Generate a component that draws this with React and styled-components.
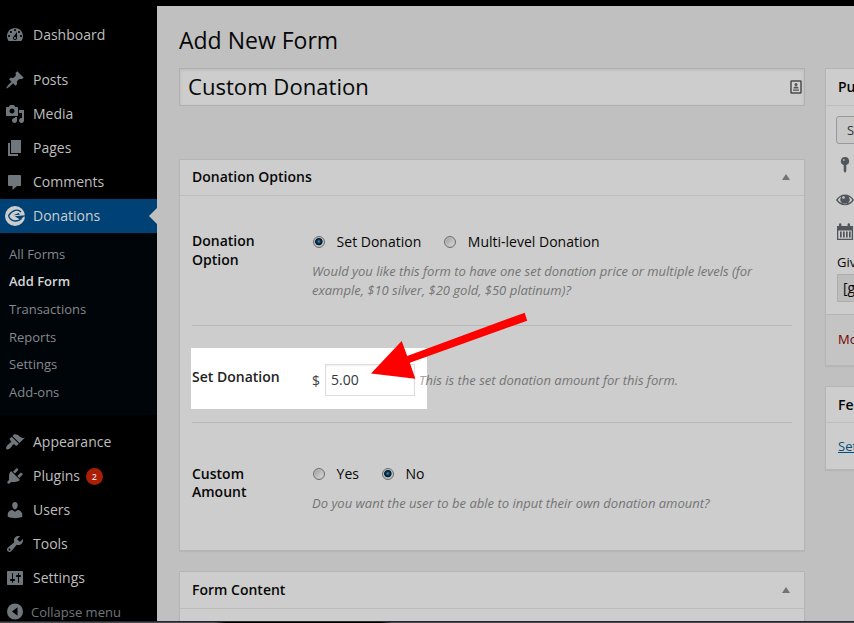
import React from "react";
import styled, { createGlobalStyle, css } from "styled-components";

const GlobalStyle = createGlobalStyle`
  * { box-sizing: border-box; }
  html, body { margin: 0; padding: 0; height: 100%; overflow: hidden; background: #000; }
  body { font-family: "Open Sans", sans-serif; font-size: 14px; color: #070707; }
`;

const Page = styled.div`
  width: 854px;
  height: 623px;
  display: flex;
  flex-direction: column;
  overflow: hidden;
  background: #000;
`;
const Columns = styled.div`
  display: flex;
  height: 615px;
  margin-top: 6px;
`;
const Taskbar = styled.div`
  height: 2px;
  border-top: 1px solid #26282b;
  background: linear-gradient(90deg, #4a4b4e 0 214px, #000 226px 380px, #4a4b4e 392px);
`;

const Sidebar = styled.nav`
  width: 157px;
  flex: none;
  padding-top: 12px;
  background: #000;
  overflow: hidden;
`;
const MenuItem = styled.a`
  display: flex;
  align-items: center;
  height: 34px;
  padding-left: 5px;
  margin-top: ${(p) => p.$gap || 0}px;
  color: #bebebe;
  line-height: 18px;
  position: relative;
  ${(p) => p.$active && css`
    background: #004276;
    color: #cdcdcd;
    &::after {
      content: "";
      position: absolute;
      right: 0;
      top: 9px;
      border: 8px solid transparent;
      border-left-width: 0;
      border-right-color: #c1c1c1;
    }
  `}
`;
const MenuIcon = styled.svg`
  width: 20px;
  height: 20px;
  flex: none;
  margin-right: 8px;
  margin-top: -1px;
  fill: #70777c;
`;
const CollapseItem = styled(MenuItem)`
  font-size: 13px;
  color: #70777c;
  ${MenuIcon} { margin-right: 6px; }
`;
const Count = styled.span`
  width: 17px;
  height: 17px;
  margin-left: 6px;
  border-radius: 50%;
  background: #aa1e04;
  color: #dcdcdc;
  font-size: 9px;
  font-weight: 600;
  line-height: 17px;
  text-align: center;
`;
const Submenu = styled.div`
  height: 182px;
  padding: 7.8px 0 0 9px;
  background: #000509;
`;
const SubItem = styled.a`
  display: block;
  height: 27.6px;
  line-height: 27.6px;
  font-size: 13px;
  color: ${(p) => (p.$current ? "#d6d6d6" : "#84898d")};
  font-weight: ${(p) => (p.$current ? 600 : 400)};
`;

const Content = styled.main`
  flex: 1;
  min-width: 0;
  display: flex;
  padding-left: 22px;
  gap: 20px;
  background: #c0c0c0;
  overflow: hidden;
`;
const Primary = styled.div`
  width: 626px;
  flex: none;
`;
const Secondary = styled.aside`
  width: 280px;
  flex: none;
  padding-top: 62px;
`;
const Heading = styled.h1`
  height: 62px;
  margin: 0;
  padding-top: 18px;
  font-size: 23px;
  font-weight: 400;
  line-height: 32px;
  white-space: nowrap;
`;
const TitleField = styled.div`
  display: flex;
  align-items: center;
  justify-content: space-between;
  height: 38px;
  padding: 0 2px 0 8px;
  margin-bottom: 53px;
  border: 1px solid #b0b0b0;
  box-shadow: inset 0 1px 3px rgba(0, 0, 0, 0.1);
  background: #cdcdcd;
`;
const TitleText = styled.span`
  height: 36px;
  font-size: 22.1px;
  line-height: 35px;
`;
const Panel = styled.section`
  height: ${(p) => p.$h}px;
  margin-bottom: 20px;
  border: 1px solid #b5b5b5;
  box-shadow: 0 1px 1px rgba(0, 0, 0, 0.05);
  background: #cdcdcd;
`;
const PanelHeader = styled.header`
  display: flex;
  align-items: center;
  justify-content: space-between;
  height: ${(p) => p.$h || 36}px;
  padding: ${(p) => (p.$low ? "1px 14px 0 12px" : "0 14px 1px 12px")};
  border-bottom: 1px solid #bdbdbd;
  font-weight: 600;
  line-height: 20px;
  white-space: nowrap;
`;
const Toggle = styled.i`
  border: 4.5px solid transparent;
  border-top-width: 0;
  border-bottom: 6px solid #707377;
`;
const Fields = styled.div`
  padding: 0 12px;
`;
const Field = styled.div`
  position: relative;
  display: flex;
  height: ${(p) => p.$h}px;
  padding-top: ${(p) => p.$top}px;
  border-bottom: ${(p) => (p.$last ? 0 : 1)}px solid #b7b7b7;
`;
const FieldLabel = styled.div`
  position: relative;
  width: 120px;
  flex: none;
  padding-right: 30px;
  padding-top: ${(p) => p.$drop || 0}px;
  font-weight: 600;
  line-height: ${(p) => p.$leading || 18.5}px;
  ${(p) => p.$lit && css`
    padding-right: 0;
    color: #222;
  `}
`;
const FieldBody = styled.div`
  position: relative;
  flex: 1;
`;
const Options = styled.div`
  display: flex;
  align-items: center;
  height: 20px;
`;
const Option = styled.label`
  display: flex;
  align-items: center;
  gap: 11.6px;
  margin-right: ${(p) => p.$after || 0}px;
  padding-left: 1px;
  line-height: 20px;
  white-space: nowrap;
`;
const Radio = styled.span`
  display: block;
  width: 12px;
  height: 12px;
  border: 1px solid #6b6d6e;
  border-radius: 50%;
  background: ${(p) =>
    p.$on
      ? "radial-gradient(circle at 48% 45%, #4f9fc4 0, #0b4569 1.5px, #041a2b 3px, #0a1c29 3.4px, #b9bdbf 4.2px)"
      : "linear-gradient(135deg, #979a9c, #d0d0d0 80%)"};
  box-shadow: inset 0 0 0 1px #bfc1c2;
`;
const Hint = styled.p`
  margin: ${(p) => p.$top}px 0 0;
  color: #747474;
  font-size: 13px;
  font-style: italic;
  line-height: 19px;
  white-space: nowrap;
`;
const Spotlight = styled.div`
  position: absolute;
  left: -1px;
  top: 22px;
  width: 236px;
  height: 61px;
  background: #fff;
`;
const AmountRow = styled.div`
  display: flex;
  align-items: center;
  height: 32px;
  white-space: nowrap;
`;
const Currency = styled.span`
  width: 13px;
  color: #444;
`;
const AmountInput = styled.div`
  width: 90px;
  height: 32px;
  margin-right: 4px;
  padding-left: 5px;
  border: 1px solid #ddd;
  box-shadow: inset 0 1px 2px rgba(0, 0, 0, 0.07);
  background: #fff;
  color: #32373c;
  line-height: 30px;
`;
const LitText = styled.span`
  color: #a5a5a5;
`;
const Arrow = styled.svg`
  position: absolute;
  left: 179px;
  top: -14px;
  width: 158px;
  height: 68px;
  fill: #f00;
`;

const PublishBody = styled.div`
  height: 209px;
  padding: 10px 0 0 10px;
  border-bottom: 1px solid #b5b5b5;
  white-space: nowrap;
  overflow: hidden;
`;
const SaveButton = styled.div`
  width: 90px;
  height: 28px;
  padding-left: 10px;
  border: 1px solid #999;
  border-radius: 3px;
  background: #c8c8c8;
  color: #333;
  font-size: 13px;
  line-height: 27px;
`;
const PublishIcons = styled.div`
  display: flex;
  flex-direction: column;
  padding-top: 11px;
  height: 106px;
`;
const PublishIcon = styled.svg`
  width: 20px;
  height: 20px;
  margin-bottom: ${(p) => p.$after || 0}px;
  margin-left: -1px;
  fill: #50565b;
`;
const ShortcodeLabel = styled.div`
  height: 24px;
  padding-left: 1px;
  font-size: 13px;
  line-height: 24px;
`;
const Shortcode = styled.div`
  width: 200px;
  height: 28px;
  margin-left: 1px;
  padding-left: 5px;
  border: 1px solid #adadad;
  background: #bdbdbd;
  line-height: 25px;
`;
const PublishFooter = styled.div`
  height: 50px;
  padding-left: 12px;
  background: #c4c4c4;
  color: #730000;
  font-size: 13px;
  line-height: 49px;
`;
const ImageLink = styled.a`
  display: block;
  padding: 14px 12px;
  color: #005080;
  font-size: 13px;
  line-height: 19px;
  text-decoration: underline;
`;

const paths = {
  dashboard: "M3.76 16h12.48c1.1-1.37 1.76-3.11 1.76-5 0-4.42-3.58-8-8-8s-8 3.58-8 8c0 1.89.66 3.63 1.76 5zM10 4c.55 0 1 .45 1 1s-.45 1-1 1-1-.45-1-1 .45-1 1-1zM6 6c.55 0 1 .45 1 1s-.45 1-1 1-1-.45-1-1 .45-1 1-1zm8 0c.55 0 1 .45 1 1s-.45 1-1 1-1-.45-1-1 .45-1 1-1zm-5.37 5.55L12 7v6c0 1.1-.9 2-2 2s-2-.9-2-2c0-.57.24-1.08.63-1.45zM4 10c.55 0 1 .45 1 1s-.45 1-1 1-1-.45-1-1 .45-1 1-1zm12 0c.55 0 1 .45 1 1s-.45 1-1 1-1-.45-1-1 .45-1 1-1zm-5 3c0-.55-.45-1-1-1s-1 .45-1 1 .45 1 1 1 1-.45 1-1z",
  posts: "M10.44 3.02l1.82-1.82 6.36 6.35-1.83 1.82c-1.05-.68-2.48-.57-3.41.36l-.75.75c-.92.93-1.04 2.35-.35 3.41l-1.83 1.82-2.41-2.41-2.8 2.79c-.42.42-3.38 2.71-3.8 2.29s1.86-3.39 2.28-3.81l2.79-2.79L4.1 9.36l1.83-1.82c1.05.69 2.48.57 3.4-.36l.75-.75c.93-.92 1.05-2.35.36-3.41z",
  media: "M13 11V4c0-.55-.45-1-1-1h-1.67L9 1H5L3.67 3H2c-.55 0-1 .45-1 1v7c0 .55.45 1 1 1h10c.55 0 1-.45 1-1zM7 4.5c1.38 0 2.5 1.12 2.5 2.5S8.38 9.5 7 9.5 4.5 8.38 4.5 7 5.62 4.5 7 4.5zM14 6h5v10.5c0 1.38-1.12 2.5-2.5 2.5S14 17.88 14 16.5s1.12-2.5 2.5-2.5c.17 0 .34.02.5.05V9h-3V6zm-4 8.05V13h2v3.5c0 1.38-1.12 2.5-2.5 2.5S7 17.88 7 16.5 8.12 14 9.5 14c.17 0 .34.02.5.05z",
  pages: "M6 15V2h10v13H6zm-1 1h8v2H3V5h2v11z",
  comments: "M4 3h11c.55 0 1 .45 1 1v9c0 .55-.45 1-1 1h-3l-4.5 4v-4H4c-.55 0-1-.45-1-1V4c0-.55.45-1 1-1z",
  appearance: "M14.48 11.06L7.41 3.99l1.5-1.5c.5-.56 2.3-.47 3.51.32 1.21.8 1.43 1.28 2.91 2.1 1.18.64 2.45 1.26 4.45.85zm-.71.71L6.7 4.7 4.93 6.47c-.39.39-.39 1.02 0 1.41l1.06 1.06c.39.39.39 1.03 0 1.42-.6.6-1.43 1.11-2.21 1.69-.35.26-.7.53-1.01.84C1.43 14.23.4 16.08 1.4 17.07c.99 1 2.84-.03 4.18-1.36.31-.31.58-.66.85-1.02.57-.78 1.08-1.61 1.69-2.21.39-.39 1.02-.39 1.41 0l1.06 1.06c.39.39 1.02.39 1.41 0z",
  plugins: "M13.11 4.36L9.87 7.6 8 5.73l3.24-3.24c.35-.34 1.05-.2 1.56.32.52.51.66 1.21.31 1.55zm-8 1.77l.91-1.12 9.01 9.01-1.19.84c-.71.71-2.63 1.16-3.82 1.16H6.14L4.9 17.26c-.59.59-1.54.59-2.12 0-.59-.58-.59-1.53 0-2.12l1.24-1.24v-3.88c0-1.13.4-3.19 1.09-3.89zm7.26 3.97l3.24-3.24c.34-.35 1.04-.21 1.55.31.52.51.66 1.21.31 1.55l-3.24 3.25z",
  users: "M10 9.25c-2.27 0-2.73-3.44-2.73-3.44C7 4.02 7.82 2 9.97 2c2.16 0 2.98 2.02 2.71 3.81 0 0-.41 3.44-2.68 3.44zm0 2.57L12.72 10c2.39 0 4.52 2.33 4.52 4.53v2.49s-3.65 1.13-7.24 1.13c-3.65 0-7.24-1.13-7.24-1.13v-2.49c0-2.25 1.94-4.48 4.47-4.48z",
  tools: "M16.68 9.77c-1.34 1.34-3.3 1.67-4.95.99l-5.41 6.52c-.99.99-2.59.99-3.58 0s-.99-2.59 0-3.57l6.52-5.42c-.68-1.65-.35-3.61.99-4.95 1.28-1.28 3.12-1.62 4.72-1.06l-2.89 2.89 2.82 2.82 2.86-2.87c.53 1.58.18 3.39-1.08 4.65zM3.81 16.21c.4.39 1.04.39 1.43 0 .4-.4.4-1.04 0-1.43-.39-.4-1.03-.4-1.43 0-.39.39-.39 1.03 0 1.43z",
  settings: "M18 16V4c0-.55-.45-1-1-1H3c-.55 0-1 .45-1 1v12c0 .55.45 1 1 1h14c.55 0 1-.45 1-1zM8 11h1c.55 0 1 .45 1 1s-.45 1-1 1H8v1.5c0 .28-.22.5-.5.5s-.5-.22-.5-.5V13H6c-.55 0-1-.45-1-1s.45-1 1-1h1V5.500c0-.28.22-.5.5-.5s.5.22.5.5V11zm5-2h-1c-.55 0-1-.45-1-1s.45-1 1-1h1V5.500c0-.28.22-.5.5-.5s.5.22.5.5V7h1c.55 0 1 .45 1 1s-.45 1-1 1h-1v5.500c0 .28-.22.5-.5.5s-.5-.22-.5-.5V9z",
  collapse: "M10 1.5a8 8 0 1 0 0 16 8 8 0 1 0 0-16zM12.5 5.3v8.4L7 9.5z",
};

function Item({ icon, label, gap, children }) {
  return (
    <MenuItem $gap={gap}>
      <MenuIcon viewBox="0 0 20 20"><path fillRule="evenodd" d={paths[icon]} /></MenuIcon>
      {label}
      {children}
    </MenuItem>
  );
}

function GiveLogo() {
  return (
    <MenuIcon viewBox="0 0 20 20">
      <circle cx="10" cy="10" r="10" fill="#cdcdcd" />
      <path d="M16 6C13 2.7 7.2 4 3.6 9.6c1.4 5.6 8.4 7.2 13 3" fill="none" stroke="#004276" strokeWidth="1.3" />
      <path d="M20 9.3l-10.2.9 4.7 3c2-.5 3.2-1.5 4-2.5l1.5-.3z" fill="#004276" />
      <path d="M8.3 9.3l5.4-2.3 1.3 1.7z" fill="#004276" />
    </MenuIcon>
  );
}

const submenu = ["All Forms", "Add Form", "Transactions", "Reports", "Settings", "Add-ons"];

export default function App() {
  return (
    <Page>
      <GlobalStyle />
      <Columns>
        <Sidebar>
          <Item icon="dashboard" label="Dashboard" />
          <Item icon="posts" label="Posts" gap={11} />
          <Item icon="media" label="Media" />
          <Item icon="pages" label="Pages" />
          <Item icon="comments" label="Comments" />
          <MenuItem $active><GiveLogo />Donations</MenuItem>
          <Submenu>
            {submenu.map((name) => (
              <SubItem key={name} $current={name === "Add Form"}>{name}</SubItem>
            ))}
          </Submenu>
          <Item icon="appearance" label="Appearance" gap={10} />
          <Item icon="plugins" label="Plugins"><Count>2</Count></Item>
          <Item icon="users" label="Users" />
          <Item icon="tools" label="Tools" />
          <Item icon="settings" label="Settings" />
          <CollapseItem>
            <MenuIcon viewBox="0 0 20 20"><path fillRule="evenodd" d={paths.collapse} /></MenuIcon>
            Collapse menu
          </CollapseItem>
        </Sidebar>

        <Content>
          <Primary>
            <Heading>Add New Form</Heading>
            <TitleField>
              <TitleText>Custom Donation</TitleText>
              <svg width="12" height="14" viewBox="0 0 12 14">
                <rect x="1" y="1" width="10" height="12" rx="0.5" fill="#d2d2d2" stroke="#4c4c4c" strokeWidth="1.5" />
                <circle cx="6" cy="4.6" r="1.5" fill="#555" />
                <path d="M3.5 8.5V7.5l1.5-1h2l1.5 1v1zM3 9.5h6v1.3H3z" fill="#555" />
              </svg>
            </TitleField>

            <Panel $h={392}>
              <PanelHeader>Donation Options<Toggle /></PanelHeader>
              <Fields>
                <Field $h={130} $top={36}>
                  <FieldLabel>Donation Option</FieldLabel>
                  <FieldBody>
                    <Options>
                      <Option $after={22}><Radio $on />Set Donation</Option>
                      <Option><Radio />Multi-level Donation</Option>
                    </Options>
                    <Hint $top={10}>
                      Would you like this form to have one set donation price or multiple levels (for<br />
                      example, $10 silver, $20 gold, $50 platinum)?
                    </Hint>
                  </FieldBody>
                </Field>
                <Field $h={97} $top={38}>
                  <Spotlight />
                  <FieldLabel $lit $drop={4}>Set Donation</FieldLabel>
                  <FieldBody>
                    <AmountRow>
                      <Currency>$</Currency>
                      <AmountInput>5.00</AmountInput>
                      <Hint $top={0}><LitText>T</LitText>his is the set donation amount for this form.</Hint>
                    </AmountRow>
                  </FieldBody>
                  <Arrow viewBox="0 0 158 68">
                    <path d="M0 61.5L30.7 29l5.5 15L153.7.7l2.5 8L38.8 50.8l5.5 15.9z" />
                  </Arrow>
                </Field>
                <Field $h={127} $top={41} $last>
                  <FieldLabel $drop={1} $leading={18}>Custom Amount</FieldLabel>
                  <FieldBody>
                    <Options>
                      <Option $after={22}><Radio />Yes</Option>
                      <Option><Radio $on />No</Option>
                    </Options>
                    <Hint $top={10}>Do you want the user to be able to input their own donation amount?</Hint>
                  </FieldBody>
                </Field>
              </Fields>
            </Panel>

            <Panel $h={120}>
              <PanelHeader $h={37}>Form Content<Toggle /></PanelHeader>
            </Panel>
          </Primary>

          <Secondary>
            <Panel $h={298}>
              <PanelHeader $h={37}>Publish</PanelHeader>
              <PublishBody>
                <SaveButton>Save Draft</SaveButton>
                <PublishIcons>
                  <PublishIcon viewBox="0 0 20 20" $after={15}>
                    <path d="M10 2a4.1 4.1 0 0 1 1.3 8v6L10 18l-1.3-2v-6A4.1 4.1 0 0 1 10 2z" />
                    <circle cx="8.8" cy="5" r="1" fill="#aaa" />
                  </PublishIcon>
                  <PublishIcon viewBox="0 0 20 20" $after={12}>
                    <path fillRule="evenodd" d="M1 10c4-7.5 14-7.5 18 0-4 7-14 7-18 0zm1.8 0c3.5 5 10.9 5 14.4 0-1-1.7-2-2.6-3.5-3.2a4.6 4.6 0 1 1-7.4 0C4.8 7.4 3.8 8.5 2.8 10z" />
                    <circle cx="8.5" cy="7.5" r="1.3" fill="#ccc" />
                  </PublishIcon>
                  <PublishIcon viewBox="0 0 20 20">
                    <path fillRule="evenodd" d="M2 4h2V2.5a1.2 1.2 0 0 1 2.4 0V4h6.2V2.5a1.2 1.2 0 0 1 2.4 0V4h3v14H2zM3.3 8.5v8.2h13.4V8.5zM5 9.5h1.7v6H5zm3 0h1.7v6H8zm3 0h1.7v6H11zm3 0h1.7v6H14z" />
                  </PublishIcon>
                </PublishIcons>
                <ShortcodeLabel>Give Form Shortcode:</ShortcodeLabel>
                <Shortcode>[give_form]</Shortcode>
              </PublishBody>
              <PublishFooter>Move to Trash</PublishFooter>
            </Panel>
            <Panel $h={84}>
              <PanelHeader $low>Featured Image</PanelHeader>
              <ImageLink>Set featured image</ImageLink>
            </Panel>
          </Secondary>
        </Content>
      </Columns>
      <Taskbar />
    </Page>
  );
}
